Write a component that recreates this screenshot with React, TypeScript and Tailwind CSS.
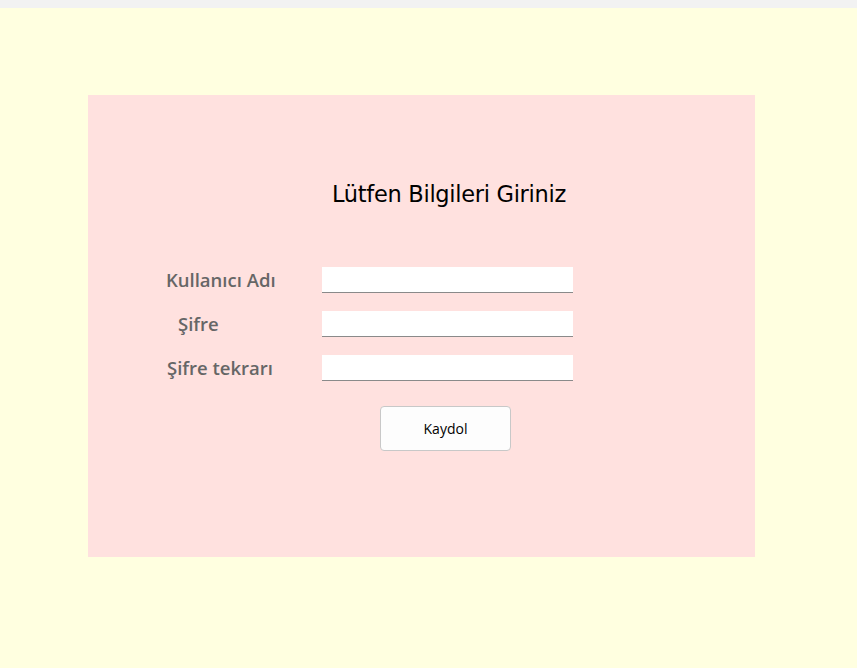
import React from "react";

export default function App() {
  const labelCls =
    "text-[18.5px] font-semibold text-[#666666] leading-[26px] [font-family:'Open_Sans',sans-serif]";
  const inputCls =
    "w-[251px] h-[26px] bg-white border-0 border-b border-b-[#8a8a8a] outline-none";
  return (
    <div className="w-[857px] h-[668px] bg-[#ffffe0] flex flex-col">
      <div className="h-[8px] bg-[#f2f2f2]" />
      <div className="ml-[88px] mt-[87px] w-[667px] h-[462px] bg-[#ffe1df] flex flex-col">
        <h1 className="mt-[84px] ml-[244px] text-[22.5px] leading-[30px] text-black [font-family:'DejaVu_Sans',sans-serif] tracking-[-0.3px]">
          Lütfen Bilgileri Giriniz
        </h1>
        <div className="mt-[58px] flex flex-col gap-[19px]">
          <div className="flex items-center">
            <span className={`${labelCls} ml-[78px] w-[156px]`}>Kullanıcı Adı</span>
            <input className={inputCls} />
          </div>
          <div className="flex items-center -mt-[1px]">
            <span className={`${labelCls} ml-[90px] w-[144px]`}>Şifre</span>
            <input type="password" className={inputCls} />
          </div>
          <div className="flex items-center -mt-[1px]">
            <span className={`${labelCls} ml-[79px] w-[155px]`}>Şifre tekrarı</span>
            <input type="password" className={inputCls} />
          </div>
        </div>
        <button className="mt-[25px] ml-[292px] w-[131px] h-[45px] bg-[#fdfdfd] border border-[#c8c8c8] rounded-[4px] text-[14px] text-black [font-family:'Open_Sans',sans-serif]">
          Kaydol
        </button>
      </div>
    </div>
  );
}
